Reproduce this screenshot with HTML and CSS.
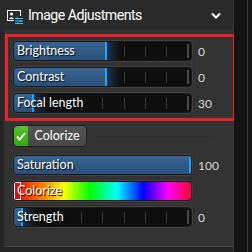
FILE: index.html
```html
<!DOCTYPE html>
<html>
<head>
<meta charset="utf-8">
<link rel="stylesheet" href="styles.css">
</head>
<body>
<div class="win">
  <div class="main">
    <div class="header">
      <svg class="hicon" width="16" height="14" viewBox="0 0 16 14">
        <rect x="0.5" y="0.5" width="13" height="10" fill="none" stroke="#fff" stroke-width="1"/>
        <circle cx="4.5" cy="4" r="1.6" fill="#fff"/>
        <path d="M2 9 Q4.5 5.5 7 9 Z" fill="#fff"/>
        <rect x="7" y="6" width="9" height="8" fill="#2a2a2a"/>
        <path d="M8 8.5 H16 M8 11 H16 M8 13.5 H16" stroke="#2ec5f0" stroke-width="1.2"/>
        <path d="M10 7.5 V9.5 M13.5 10 V12 M10.5 12.5 V14" stroke="#2ec5f0" stroke-width="1.4"/>
      </svg>
      <span class="title">Image Adjustments</span>
      <svg class="chev" width="10" height="7" viewBox="0 0 10 7">
        <path d="M1 1.5 L5 5.5 L9 1.5" fill="none" stroke="#fff" stroke-width="2"/>
      </svg>
    </div>
    <div class="panel">
      <div class="group">
        <div class="row">
          <div class="slider"><div class="fill" style="width:91px"></div><span class="label">Brightness</span></div>
          <span class="val">0</span>
        </div>
        <div class="row">
          <div class="slider"><div class="fill" style="width:91px"></div><span class="label">Contrast</span></div>
          <span class="val">0</span>
        </div>
        <div class="row">
          <div class="slider"><div class="fill" style="width:18px"></div><span class="label">Focal length</span></div>
          <span class="val">30</span>
        </div>
      </div>
      <div class="checkrow">
        <div class="check">
          <span class="box">
            <svg width="10" height="9" viewBox="0 0 10 9"><path d="M1 4.5 L3.8 7.5 L9 1" fill="none" stroke="#fff" stroke-width="2"/></svg>
          </span>
          <span class="ctext">Colorize</span>
        </div>
        <span class="rule"></span>
      </div>
      <div class="sliders">
        <div class="row">
          <div class="slider"><div class="fill" style="width:175px"></div><span class="label">Saturation</span></div>
          <span class="val">100</span>
        </div>
        <div class="row">
          <div class="slider hue"><div class="knob"></div><span class="label">Colorize</span></div>
        </div>
        <div class="row">
          <div class="slider"><div class="fill" style="width:7px"></div><span class="label">Strength</span></div>
          <span class="val">0</span>
        </div>
      </div>
      <div class="bottomrule"></div>
    </div>
  </div>
  <div class="scroll"><div class="sline"></div></div>
</div>
</body>
</html>
```
FILE: styles.css
```css
html, body {
  margin: 0;
  padding: 0;
  background: #1f1f1f;
}
body {
  font-family: Lato, "Open Sans", sans-serif;
  color: #fff;
}
.win {
  width: 252px;
  height: 252px;
  display: flex;
  overflow: hidden;
}
.main {
  width: 234px;
  display: flex;
  flex-direction: column;
  background: #262626;
  border-right: 1px solid #3a3a3a;
  box-sizing: border-box;
}
.header {
  height: 30px;
  display: flex;
  align-items: center;
  padding-left: 7px;
  background: #2a2a2a;
  box-sizing: border-box;
}
.hicon {
  margin-top: 3px;
}
.title {
  font-family: Roboto, sans-serif;
  font-size: 14.2px;
  letter-spacing: -0.55px;
  margin-left: 5px;
  flex: 1;
}
.chev {
  margin-right: 12px;
}
.panel {
  margin-left: 3px;
  height: 217px;
  background: #333333;
  display: flex;
  flex-direction: column;
  box-sizing: border-box;
  border-left: 1px solid #2a2a2a;
}
.group {
  margin-top: 4px;
  margin-left: 1px;
  margin-right: -3px;
  border: 3px solid #e8212a;
  padding: 4px 0 5px 5px;
  display: flex;
  flex-direction: column;
  gap: 6px;
}
.row {
  display: flex;
  align-items: center;
  gap: 6px;
  height: 20px;
}
.slider {
  position: relative;
  width: 179px;
  height: 20px;
  box-sizing: border-box;
  border: 1px solid #1a1a1a;
  border-radius: 4px;
  background: #0e0e0e;
  box-shadow: 0 0 0 1px #3f3f3f;
  overflow: hidden;
}
.slider::before {
  content: "";
  position: absolute;
  left: 0;
  right: 0;
  top: 4px;
  height: 11px;
  background: repeating-linear-gradient(90deg, transparent 0 4px, rgba(255,255,255,0.18) 4px 5px, transparent 5px 21.1px);
  z-index: 1;
}
.slider::after {
  content: "";
  position: absolute;
  right: 2px;
  top: 2px;
  bottom: 2px;
  width: 2px;
  background: #4a4a4a;
  z-index: 1;
}
.fill {
  position: absolute;
  left: 0;
  top: 0;
  bottom: 0;
  background: linear-gradient(#386591, #29507a);
  border-right: 2px solid #18a6ff;
  z-index: 2;
}
.fill::after {
  content: "";
  position: absolute;
  left: 100%;
  margin-left: 2px;
  top: 0;
  bottom: 0;
  width: 14px;
  background: linear-gradient(90deg, rgba(40,80,125,0.55), rgba(40,80,125,0));
}
.label {
  position: relative;
  z-index: 3;
  display: block;
  font-size: 12.5px;
  line-height: 18px;
  padding-left: 3px;
  text-shadow: 1px 1px 1px #000;
}
.val {
  font-size: 12px;
  color: #d8d8d8;
}
.checkrow {
  display: flex;
  align-items: center;
  margin-top: 4px;
  padding-left: 9px;
  height: 22px;
}
.check {
  display: flex;
  width: 74px;
  height: 22px;
  box-sizing: border-box;
  border: 1px solid #1e1e1e;
  border-radius: 5px;
  overflow: hidden;
}
.box {
  width: 14px;
  background: linear-gradient(#52c42a, #38a614);
  display: flex;
  align-items: center;
  justify-content: center;
}
.ctext {
  flex: 1;
  background: linear-gradient(#555555, #474747);
  font-size: 12.5px;
  line-height: 20px;
  text-align: center;
}
.rule {
  flex: 1;
  height: 1px;
  margin: 0 22px 0 10px;
  background: #2e2e2e;
}
.sliders {
  margin-top: 8px;
  padding-left: 9px;
  display: flex;
  flex-direction: column;
  gap: 6px;
}
.sliders .row:first-child .slider::after {
  display: none;
}
.hue {
  background: linear-gradient(90deg, #ff0000 0%, #ff2a00 6%, #ff9000 18%, #ffff00 28%, #00ff00 43%, #00ffff 58%, #0000ff 73%, #ff00ff 87%, #ff0030 100%);
}
.hue::before, .hue::after {
  display: none;
}
.knob {
  position: absolute;
  left: 0;
  top: 0;
  bottom: 0;
  width: 5px;
  border: 1px solid #fff;
  background: #d01010;
  z-index: 2;
}
.bottomrule {
  margin-top: auto;
  height: 1px;
  background: #444;
  margin-bottom: 0;
}
.scroll {
  flex: 1;
  background: #141414;
  display: flex;
  justify-content: flex-end;
}
.sline {
  width: 1px;
  margin-right: 4px;
  background: #3a3a3a;
}
```
